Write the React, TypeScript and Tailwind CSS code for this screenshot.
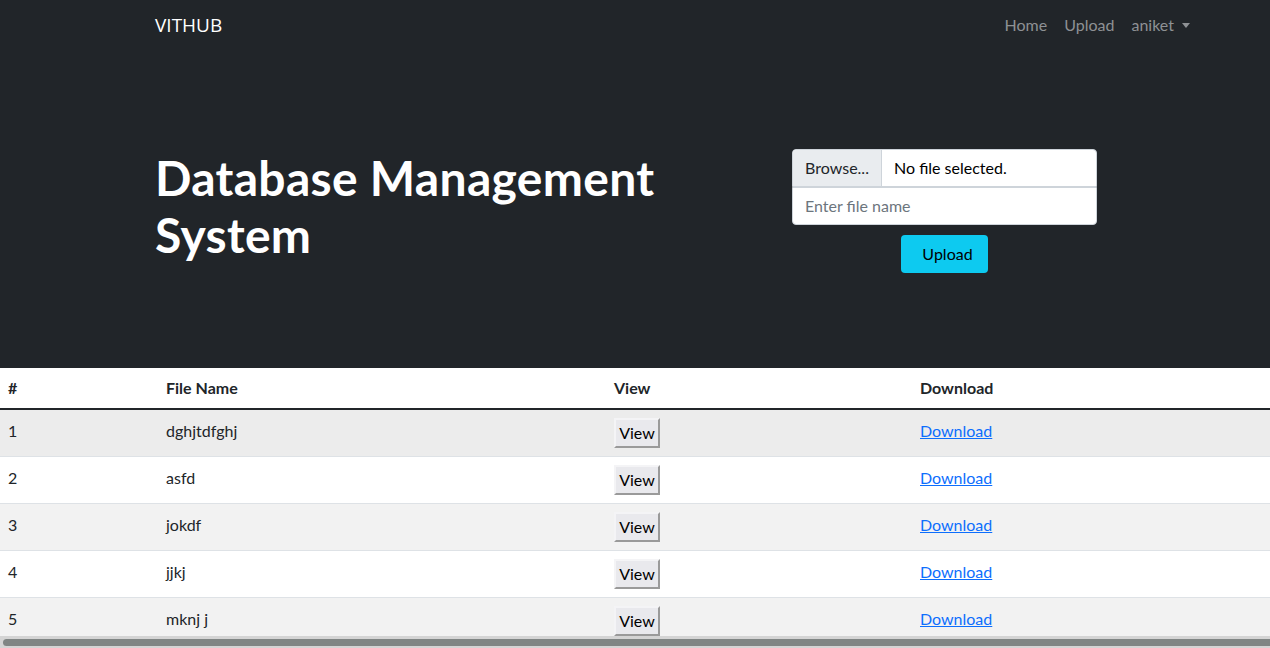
const files = [
  { id: 1, name: "dghjtdfghj" },
  { id: 2, name: "asfd" },
  { id: 3, name: "jokdf" },
  { id: 4, name: "jjkj" },
  { id: 5, name: "mknj j" },
];

function Navbar() {
  return (
    <nav className="h-[50px] bg-[#212529] flex items-center">
      <div className="w-full flex items-center justify-between pl-[155px] pr-[80px]">
        <a href="#" className="text-white text-[19px] font-['Open_Sans',sans-serif]">
          VITHUB
        </a>
        <ul className="flex items-center gap-[17px] text-[16px] text-[#8e9194]">
          <li>
            <a href="#">Home</a>
          </li>
          <li>
            <a href="#">Upload</a>
          </li>
          <li className="flex items-center gap-[8px]">
            <a href="#">aniket</a>
            <span className="w-0 h-0 border-l-[4px] border-r-[4px] border-t-[5px] border-l-transparent border-r-transparent border-t-[#8e9194]"></span>
          </li>
        </ul>
      </div>
    </nav>
  );
}

function Hero() {
  return (
    <section className="h-[318px] bg-[#212529] flex items-center pl-[155px]">
      {/* title */}
      <h1 className="w-[637px] mb-[7px] text-white font-bold text-[48px] leading-[57px] tracking-[0.3px]">
        Database Management
        <br />
        System
      </h1>
      {/* upload form */}
      <form className="w-[305px] flex flex-col items-center pt-[3px]">
        <div className="w-full h-[38px] flex bg-white border border-[#ced4da] rounded-t-[4px] overflow-hidden">
          <span className="w-[89px] bg-[#e9ecef] border-r border-[#ced4da] flex items-center justify-center text-[16px] text-[#212529]">
            Browse...
          </span>
          <span className="flex items-center pl-[12px] text-[16px] text-black">
            No file selected.
          </span>
        </div>
        <input
          type="text"
          placeholder="Enter file name"
          className="w-full h-[38px] bg-white border border-[#ced4da] rounded-b-[4px] px-[12px] text-[16px] placeholder:text-[#6c757d] outline-none"
        />
        <button
          type="button"
          className="mt-[10px] w-[87px] h-[38px] rounded-[4px] bg-[#0dcaf0] text-[16px] text-black pl-[6px]"
        >
          Upload
        </button>
      </form>
    </section>
  );
}

function FileTable() {
  return (
    <div className="flex-1 overflow-hidden bg-white">
      <table className="w-full border-separate border-spacing-0 text-[16px] text-[#212529] text-left">
        <colgroup>
          <col className="w-[158px]" />
          <col className="w-[448px]" />
          <col className="w-[306px]" />
          <col />
        </colgroup>
        <thead>
          <tr>
            <th className="px-[8px] h-[42px] font-bold border-b-2 border-[#212529]">#</th>
            <th className="px-[8px] font-bold border-b-2 border-[#212529]">File Name</th>
            <th className="px-[8px] font-bold border-b-2 border-[#212529]">View</th>
            <th className="px-[8px] font-bold border-b-2 border-[#212529]">Download</th>
          </tr>
        </thead>
        <tbody>
          {files.map((f, i) => (
            <tr
              key={f.id}
              className={
                i === 0 ? "bg-[#ececec]" : i % 2 === 0 ? "bg-[#f2f2f2]" : "bg-white"
              }
            >
              <td className="px-[8px] pt-[9px] align-top leading-[24px] border-b border-[#dee2e6]">
                {f.id}
              </td>
              <td className="px-[8px] pt-[9px] align-top leading-[24px] border-b border-[#dee2e6]">
                {f.name}
              </td>
              <td className="px-[8px] pt-[8px] pb-[8px] align-top border-b border-[#dee2e6]">
                <button className="block w-[46px] h-[30px] bg-[#e9e9ed] border-2 border-t-[#f4f4f6] border-l-[#f4f4f6] border-b-[#9a9a9a] border-r-[#9a9a9a] text-black text-[16px] leading-none">
                  View
                </button>
              </td>
              <td className="px-[8px] pt-[9px] align-top leading-[24px] border-b border-[#dee2e6]">
                <a href="#" className="text-[#0d6efd] underline">
                  Download
                </a>
              </td>
            </tr>
          ))}
        </tbody>
      </table>
    </div>
  );
}

export default function App() {
  return (
    <div className="h-[648px] flex flex-col overflow-hidden font-['Lato',sans-serif]">
      <Navbar />
      <Hero />
      <FileTable />
      {/* horizontal scrollbar */}
      <div className="h-[12px] bg-[#d4d4d4] flex items-center pl-[3px]">
        <div className="h-[7px] w-full bg-[#808584] rounded-l-full"></div>
      </div>
    </div>
  );
}
